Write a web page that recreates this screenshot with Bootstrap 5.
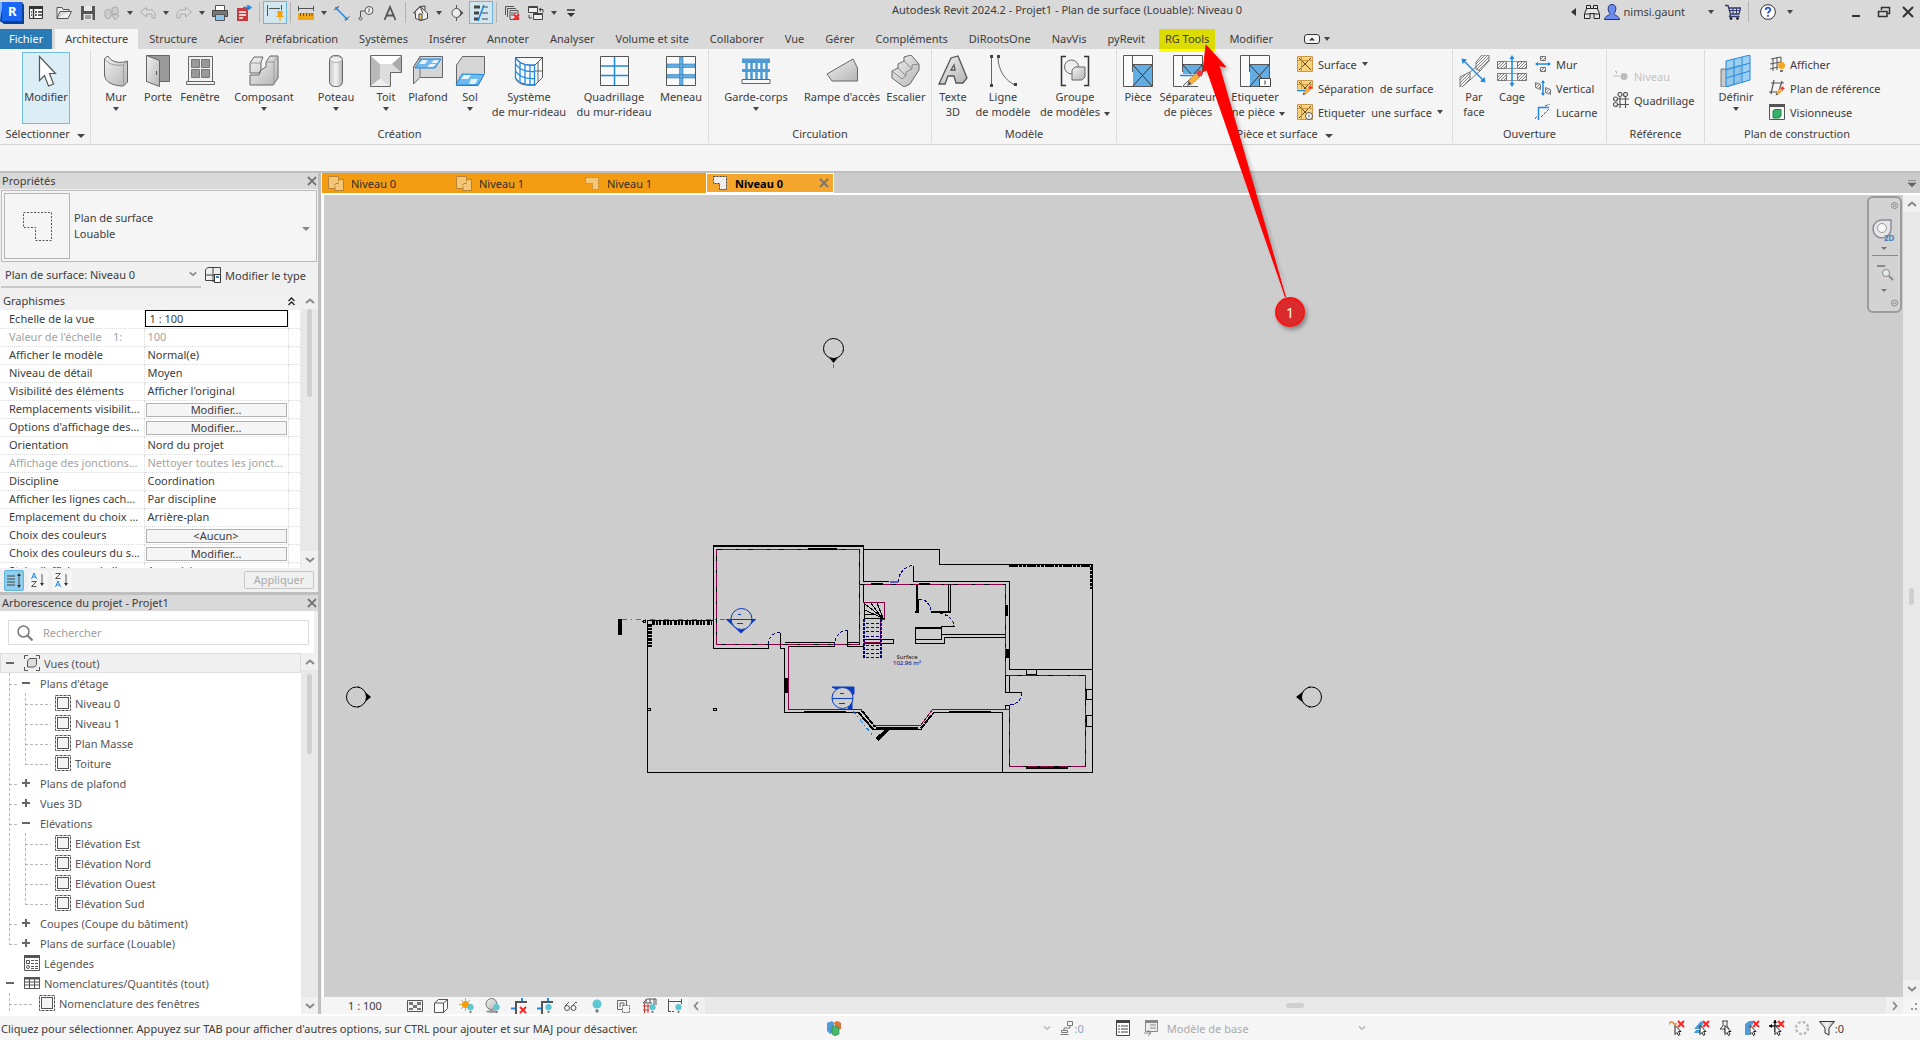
<!DOCTYPE html>
<html lang="fr">
<head>
<meta charset="utf-8">
<meta name="viewport" content="width=device-width, initial-scale=1">
<title>Autodesk Revit 2024.2 - Projet1</title>
<link href="https://cdn.jsdelivr.net/npm/bootstrap@5.3.0/dist/css/bootstrap.min.css" rel="stylesheet">
<style>
:root{--ink:#3c3c3c;--line:#c0c0c0;--bar:#d9d9d9;--pane:#f5f5f5;--canvas:#cdcdcd}
body{font-family:"Noto Sans","Open Sans",sans-serif;font-size:11px;line-height:15px;color:var(--ink);background:var(--pane);height:100vh;overflow:hidden}
button,input,select{font:inherit;color:inherit}
.btn{--bs-btn-padding-x:0;--bs-btn-padding-y:0;--bs-btn-border-radius:0;--bs-btn-font-size:11px;--bs-btn-line-height:15px;--bs-btn-color:var(--ink);--bs-btn-border-width:0;--bs-btn-disabled-color:#aaa;--bs-btn-disabled-opacity:1}
svg{display:block;flex:none}
.s16{width:16px;height:16px}.s20{width:20px;height:20px}.s32{width:32px;height:32px}
.dn{display:inline-block;border:3px solid transparent;border-top:4px solid #444;border-bottom:0;flex:none}
.dn-lg{border-width:4px 4px 0;border-style:solid}
/* title bar */
.titlebar{background:var(--bar);height:29px}
.tool{width:24px;height:23px;display:flex;align-items:center;justify-content:center}
.tool.tool-on{background:#d1e6ef;border:1px solid #6ab9dd}
.drop{width:12px;height:23px;display:flex;align-items:center;justify-content:center}
.rule{width:1px;height:21px;margin:0 3px;background:#b4b4b4}
.brand-r{width:24px;height:25px}
.wintitle{transform:translateX(-68px);padding-top:2px}
/* tabs */
.tabrow{background:var(--bar);height:20px;column-gap:1px}
.tabrow .nav-link{--bs-nav-link-color:var(--ink);color:var(--ink);padding:0 10px;height:20px;line-height:20px;border:0;white-space:nowrap}
.tabrow .file-tab{background:#2a7ab5;color:#fff;padding:0 9px;margin-right:2px}
.tabrow .nav-link.active{background:var(--pane)}
.tabrow .nav-link.hl{background:#dcdc00;box-shadow:0 3px 0 #ffff00,0 -2px 0 #dcdc00;padding:0 6px;margin:0 3px}
/* ribbon */
.ribbon{height:96px;border-bottom:1px solid #d4d4d4}
.panel{border-right:1px solid #dcdcdc;height:93px;margin-top:1px;display:flex;flex-direction:column;flex:none}
.panel-body{display:flex;flex:1 1 0;min-height:0;padding:2px 0 0 2px}
.panel-name{height:19px;line-height:19px;text-align:center;white-space:nowrap}
.big{display:flex;flex-direction:column;align-items:center;padding-top:3px;white-space:nowrap;flex:none;height:72px}
.big svg{margin-bottom:2px}
.big .dn{margin-top:3px}
.b38{width:38px}.b42{width:42px}.b48{width:48px}.b58{width:58px}.b76{width:76px}.b86{width:86px}
.modbtn{background:#dbedf5;outline:1px solid #6fbde0;outline-offset:-1px}
.stack{display:flex;flex-direction:column}
.small-cmd{display:flex;align-items:center;gap:5px;height:24px;white-space:nowrap}
.optbar{height:28px;border-bottom:2px solid #bfbfbf}
/* palettes */
.side{width:321px;border-right:3px solid #bfbfbf;background:#f0f0f0}
.half{flex:1 1 0;min-height:0;display:flex;flex-direction:column}
.pal-title{background:var(--bar);height:16px;line-height:16px;padding:0 1px 0 2px;display:flex;justify-content:space-between;align-items:center}
.pal-title h2{font-size:11px;line-height:16px;margin:0;font-weight:400}
.typebox{border:1px solid #bbb;background:var(--pane);margin:1px 1px 0;height:72px;padding:2px}
.thumb{width:66px;height:66px;border:1px solid #b4b4b4;display:flex;align-items:center;justify-content:center}
.flat-select{appearance:none;background:transparent;border:0;outline:0;color:inherit;padding:0}
.inst{width:200px;border-bottom:2px solid #c8c8c8;margin-left:1px;height:26px;padding:0 4px}
.group-row{height:18px;line-height:18px;padding:0 6px 0 3px;background:#f1f1f1}
.props{table-layout:fixed;width:100%;margin:0;border-collapse:collapse;background:#fff}
.props th,.props td{height:18px;padding:0;font-weight:400;line-height:16px;border-bottom:1px dotted #dcdcdc;border-right:1px dotted #dcdcdc;white-space:nowrap;color:var(--ink)}
.props th{padding-left:9px}.props td{padding-left:3px}
.props .dim th,.props .dim td{color:#a3a3a3}
.props .btn{display:block;width:141px;height:14px;line-height:12px;border:1px solid #b2b2b2;background:var(--pane);margin-left:-2px;margin-top:1px}
.props input{display:block;width:143px;height:17px;border:1px solid #000;margin-left:-3px;padding:0 4px;background:#fff}
.vbar{width:17px;background:#e8e8e8;display:flex;flex-direction:column;align-items:center;justify-content:space-between;flex:none}
.vbar .btn{width:17px;height:17px;background:#f0f0f0;display:flex;align-items:center;justify-content:center}
.thumb-v{width:5px;border-radius:3px;background:#cfcfcf}
.sortbtn{width:20px;height:21px;display:flex;align-items:center;justify-content:center;border:1px solid transparent;background:var(--pane)}
.sortbtn.on{background:#8ecdec;border-color:#5fb5de;border-radius:2px}
.apply{width:70px;height:18px;line-height:16px!important;border:1px solid #c6c6c6!important;border-radius:2px!important;background:#f0f0f0!important}
.findbox{border:1px solid #dcdcdc;height:25px;margin:9px 5px 8px 8px;padding:0 8px;background:#fff}
.findbox input{border:0;outline:0;background:transparent;width:100%}
.findbox input::placeholder{color:#a0a0a0}
/* project tree */
.tree,.tree ul{list-style:none;margin:0;padding:0}
.trow{height:20px;display:flex;align-items:center;white-space:nowrap;color:#555}
.trow .btn{width:20px;height:20px;display:flex;align-items:center;justify-content:center}
.root-sel{background:#f0f0f0;outline:1px solid #dedede;outline-offset:-1px}
.g1>li,.g2>li{background:repeating-linear-gradient(#b8b8b8 0 3px,transparent 3px 5px) no-repeat 9px 0/1px 100%}
.g2>li{background-position:25px 0}
.g1>li:last-child,.g2>li:last-child{background-size:1px 11px}
.g1>li>.trow,.g2>li>.trow{background:repeating-linear-gradient(90deg,#b8b8b8 0 3px,transparent 3px 5px) no-repeat 9px 11px/10px 1px}
.g1>li>.trow{padding-left:16px}
.g1>li>.trow.leaf{padding-left:39px;background-size:25px 1px}
.g2>li>.trow{padding-left:55px;background-position:25px 11px;background-size:26px 1px}
/* drawing area */
.viewtabs{height:20px;background:#cbcbcb}
.vtab{width:128px;height:20px;background:#f39c12;display:flex;align-items:center;gap:7px;padding:0 4px 0 6px;color:#2d2d2d}
.vtab.vtab-on{background:#f4a62d;border:1px solid #fff;font-weight:700;color:#000;padding-left:5px}
.drawing{background:var(--canvas);border-top:2px solid #fff;border-left:2px solid #fff}
.plan{width:100%;height:100%}
.navbox{position:absolute;right:1px;top:1px;width:35px;height:117px;border:2px solid #9b9b9b;border-radius:6px;background:#d3d3d3}
.viewctl{height:17px;background:var(--pane)}
.viewctl .scale-btn{padding:0 20px 0 26px}
.vc{width:26px;height:17px;display:flex;align-items:center;justify-content:center}
.hbar{background:#e8e8e8}
.hbar .btn{width:17px;height:17px;display:flex;align-items:center;justify-content:center;background:#f0f0f0}
.thumb-h{width:18px;height:5px;border-radius:3px;background:#cfcfcf}
.status{height:26px;border-top:2px solid #fff;background:var(--pane)}
.st{width:25px;height:22px;display:flex;align-items:center;justify-content:center}
.st-end{padding-right:76px}
/* annotation over the window */
.callout{position:absolute;left:0;top:0;width:1320px;height:340px;pointer-events:none}
.step{position:absolute;left:1275px;top:297px;width:30px;height:30px;border-radius:50%;background:#d92b2b;border:2px solid #fb1414;color:#fff;font-size:14px;display:flex;align-items:center;justify-content:center;box-shadow:2px 3px 4px rgba(0,0,0,.35);pointer-events:none}
</style>
</head>
<body class="d-flex flex-column position-relative">
<svg width="0" height="0" class="position-absolute" aria-hidden="true">
<defs>
<linearGradient id="gr" x1="0" y1="0" x2="1" y2="1"><stop offset="0" stop-color="#f2f2f2"/><stop offset="1" stop-color="#b4b4b4"/></linearGradient>
<linearGradient id="ghor"><stop offset="0" stop-color="#c8c8c8"/><stop offset=".5" stop-color="#f4f4f4"/><stop offset="1" stop-color="#b0b0b0"/></linearGradient>
<pattern id="hat" width="3" height="3" patternUnits="userSpaceOnUse"><path d="M0 3 3 0" stroke="#666" stroke-width=".8"/></pattern>
</defs>
<symbol id="up" viewBox="0 0 10 6"><path d="M1 5 5 1.500 9 5" fill="none" stroke="#888" stroke-width="2"/></symbol>
<symbol id="down" viewBox="0 0 10 6"><path d="M1 1 5 4.500 9 1" fill="none" stroke="#888" stroke-width="2"/></symbol>
<symbol id="close" viewBox="0 0 10 10"><path d="M1 1 9 9M9 1 1 9" fill="none" stroke="#777" stroke-width="1.800"/></symbol>
<symbol id="bulb" viewBox="0 0 16 16"><circle cx="8" cy="6" r="4.500" fill="#5cc6d4"/><path d="M6.500 11.500h3v2l-1.500 1.500-1.500-1.500z" fill="#777"/></symbol>
<symbol id="sheet" viewBox="0 0 16 16"><rect x=".5" y=".5" width="15" height="15" fill="none" stroke="#555" stroke-dasharray="3 1"/><rect x="2.500" y="2.500" width="11" height="11" fill="#f3f3f3" stroke="#555"/></symbol>
<symbol id="area" viewBox="0 0 16 16"><path d="M1.500 1.500h13v13h-7v-6h-6z" fill="#eee" stroke="#444" stroke-dasharray="2 1"/></symbol>
<symbol id="floorv" viewBox="0 0 16 16"><path d="M.5 1.500h10v3h5v11H7v-2H.5z" fill="#f5c57a" stroke="#b98433"/><path d="M10.500 4.500v4M7 13.500v-5h3" fill="none" stroke="#b98433" stroke-dasharray="2 1"/></symbol>
<symbol id="areav" viewBox="0 0 16 16"><path d="M1.500 2.500h13v12h-6v-6h-7z" fill="#f5c57a" stroke="#b98433" stroke-dasharray="2 1"/></symbol>
<symbol id="xroom" viewBox="0 0 32 32"><path d="M1.500.5h29v31h-29z" fill="#fafafa" stroke="#555"/><path d="M10.500.5V17M10.500 9.500h20" fill="none" stroke="#555"/><path d="M11 10h19v21H11z" fill="#62aee4"/><path d="m11 10 19 21M30 10 11 31" stroke="#333" fill="none"/></symbol>
<symbol id="xarea" viewBox="0 0 16 16"><path d="M.5.500h15v15H.5z" fill="#fbd178" stroke="#c99a4c"/><path d="m2 2 12 12M14 2 2 14" fill="none" stroke="#5c4a20"/><path d="M1 4.500h14M4.500 1v14" fill="none" stroke="#c99a4c"/></symbol>
<symbol id="pencil" viewBox="0 0 16 16"><path d="m1 15 1.500-5L5 13.500z" fill="#555"/><path d="m2.500 10 6-6L12 7.500l-7 6z" fill="#f7b13c" stroke="#b98433" stroke-width=".5"/><path d="m9 3.500 3-3L15.500 4 12 7z" fill="#f33"/></symbol>
<symbol id="ptr" viewBox="0 0 16 16"><path d="M6 5.500v9l2-2 1.500 3 1.500-1-1.500-3H12z" fill="#fff" stroke="#222"/></symbol>
<symbol id="redx" viewBox="0 0 16 16"><path d="m9 1 6 6m0-6-6 6" stroke="#f22" stroke-width="2"/></symbol>
</svg>

<header class="titlebar d-flex align-items-start position-relative">
  <div class="d-flex align-items-center" role="toolbar" aria-label="Accès rapide">
    <button class="btn" aria-label="Menu Revit"><svg class="brand-r" viewBox="0 0 24 25"><path d="M0 2h3v20H0z" fill="#7fb2f5"/><path d="M3 2h19l2 3v19H4l-4-3z" fill="#0a3f9a"/><path d="M2 2h20v19H2z" fill="#1a66f0"/><text x="8" y="16" font-size="13" font-weight="700" fill="#fff">R</text></svg></button>
    <button class="btn tool me-1" aria-label="Accueil"><svg class="s16" viewBox="0 0 16 16"><path d="M1.500 1.500h13v12h-13z" fill="#fff" stroke="#333"/><path d="M1 1h14v3H1z" fill="#333"/><path d="M5.500 4v10M3 7h1M3 10h1M7 7h2m1 0h4M7 10h2m1 0h4" stroke="#333" stroke-width="1.500"/></svg></button>
    <button class="btn tool" aria-label="Ouvrir"><svg class="s16" viewBox="0 0 16 16"><path d="M1 13.500v-11h5l1 2h6v2H4l-3 7h11l3.500-7H13" fill="#eee" stroke="#555"/></svg></button>
    <button class="btn tool" aria-label="Enregistrer"><svg class="s16" viewBox="0 0 16 16"><path d="M1 1h14v14H1z" fill="#555"/><path d="M4 1h8v5H4zM3.500 9h9v6h-9z" fill="#e6e6e6"/><path d="M5 11h6M5 13h6" stroke="#555"/></svg></button>
    <button class="btn tool" aria-label="Synchroniser"><svg class="s16" viewBox="0 0 16 16" fill="#ccc" stroke="#aaa"><path d="m1 6 3-2 3 2v6l-3 2-3-2z"/><ellipse cx="11" cy="4" rx="3" ry="2"/><path d="M8 4v5h6V4M8 10l4-1 3 2-4 4z"/></svg></button>
    <button class="btn drop" aria-label="Options de synchronisation"><i class="dn"></i></button>
    <button class="btn tool" aria-label="Annuler"><svg class="s16" viewBox="0 0 16 16"><path d="m.5 7 6-4.500V5H12l3 3v5h-3V9H6.500v3z" fill="#ddd" stroke="#aaa"/></svg></button>
    <button class="btn drop" aria-label="Liste annuler"><i class="dn"></i></button>
    <button class="btn tool" aria-label="Rétablir"><svg class="s16" viewBox="0 0 16 16"><path d="m15.500 7-6-4.500V5H4L1 8v5h3V9h5.500v3z" fill="#ddd" stroke="#aaa"/></svg></button>
    <button class="btn drop" aria-label="Liste rétablir"><i class="dn"></i></button>
    <button class="btn tool" aria-label="Imprimer"><svg class="s16" viewBox="0 0 16 16"><path d="M3.500.500h9v5h-9z" fill="#fff" stroke="#555"/><path d="M.5 5.500h15v6H.5z" fill="#777" stroke="#444"/><path d="M3.500 9.500h9v6h-9z" fill="#8cc5ee" stroke="#555"/></svg></button>
    <button class="btn tool" aria-label="Exporter en PDF"><svg class="s16" viewBox="0 0 16 16"><path d="M1 3h11v13H1z" fill="#c9393e"/><path d="M3 7h7M3 10h7M3 13h4" stroke="#fff" stroke-width="1.500"/><path d="M7 2.500h6M11 0l4 2.500L11 5" stroke="#1e88e5" stroke-width="1.500" fill="none"/></svg></button>
    <i class="rule"></i>
    <button class="btn tool tool-on" aria-label="Contraintes"><svg class="s20" viewBox="0 0 20 20"><path d="M2.500 2v11M16.500 2v5M4 5.500h11" stroke="#555" fill="none"/><path d="M12 8h6l-1 4 2 2h-3.500v4h-1v-4H11l2-2z" fill="#f5a000"/></svg></button>
    <i class="rule"></i>
    <button class="btn tool" aria-label="Mesurer"><svg class="s16" viewBox="0 0 16 16"><path d="M.5 1v5M15.500 1v5M1 3.500h14" stroke="#555"/><path d="M0 8h16v7H0z" fill="#f0a818"/><path d="M2.500 8v3M5.500 8v3M8.500 8v3M11.500 8v3M14 8v3" stroke="#7a5200"/></svg></button>
    <button class="btn drop" aria-label="Options de mesure"><i class="dn"></i></button>
    <button class="btn tool" aria-label="Cote alignée"><svg class="s16" viewBox="0 0 16 16"><path d="m2 3 11 11" stroke="#1e88e5" stroke-width="1.500"/><path d="m0 5 5-4M11 15.500l4.500-4" stroke="#555"/><path d="M1 2h4L2 5zM14 15h-4l3-3z" fill="#1e88e5"/></svg></button>
    <button class="btn tool" aria-label="Etiquette"><svg class="s16" viewBox="0 0 16 16"><circle cx="11" cy="5.500" r="4" fill="#eee" stroke="#555"/><path d="M11 3.500v4M7 6H2.500v6" stroke="#555" fill="none"/><circle cx="2.500" cy="13.500" r="1.500" fill="none" stroke="#555"/></svg></button>
    <button class="btn tool" aria-label="Texte"><svg class="s16" viewBox="0 0 16 16"><path d="M2.500 15 8 2l5.500 13M4.500 10.500h7" stroke="#555" stroke-width="1.800" fill="none"/></svg></button>
    <i class="rule"></i>
    <button class="btn tool" aria-label="Vue 3D"><svg class="s16" viewBox="0 0 16 16"><path d="m1 8 6-6.500L14.500 8v5.500L8 15.500l-5.500-2V8z" fill="#eee" stroke="#444"/><path d="M7 1.500 12 1v4M0 8.500 7 1.500l3 7" fill="none" stroke="#444"/><path d="M6 9h3v6H6z" fill="#f3d26e" stroke="#444"/></svg></button>
    <button class="btn drop" aria-label="Options vue 3D"><i class="dn"></i></button>
    <button class="btn tool" aria-label="Coupe"><svg class="s16" viewBox="0 0 16 16"><circle cx="7.500" cy="8" r="4.500" fill="#eee" stroke="#555"/><path d="M7.500 0v3.500M7.500 12.500V16" stroke="#555"/><path d="M9 3.500 14.500 8 9 12.500 12 8z" fill="#444"/></svg></button>
    <button class="btn tool tool-on" aria-label="Lignes fines"><svg class="s20" viewBox="0 0 20 20"><path d="M3 4h6" stroke="#444" stroke-width="3"/><path d="M3 10h5" stroke="#444" stroke-width="3"/><path d="M3 16h5" stroke="#444" stroke-width="3"/><path d="M11 4h6M11 10h6M11 16h6" stroke="#444"/><path d="M13 2 7 18" stroke="#1e88e5" stroke-width="1.500"/></svg></button>
    <i class="rule"></i>
    <button class="btn tool" aria-label="Fermer les vues inactives"><svg class="s16" viewBox="0 0 16 16"><path d="M1.500 10V1.500H10M3.500 12V3.500H12" fill="none" stroke="#555"/><path d="M6 5.500h8v9H6z" fill="#ddd" stroke="#555"/><path d="M7 8h6M7 10h3" stroke="#555"/><path d="m10 9.500 5 5m0-5-5 5" stroke="#f22" stroke-width="2"/></svg></button>
    <button class="btn tool" aria-label="Changer de fenêtre"><svg class="s16" viewBox="0 0 16 16"><path d="M.5 1.500h9v6h-9zM5.500 8.500h9v6h-9z" fill="#eee" stroke="#444"/><path d="M.5 2.500h9M5.500 9.500h9M11 4.500h4v3M13 3l-2 1.500L13 6M4 13H1v-3" fill="none" stroke="#444"/></svg></button>
    <button class="btn drop" aria-label="Liste des fenêtres"><i class="dn"></i></button>
    <button class="btn tool" aria-label="Personnaliser"><svg class="s16" viewBox="0 0 16 16"><path d="M3 5h8" stroke="#333" stroke-width="1.500"/><path d="M3 8h8l-4 4z" fill="#333"/></svg></button>
  </div>
  <div class="wintitle position-absolute start-50 text-nowrap">Autodesk Revit 2024.2 - Projet1 - Plan de surface (Louable): Niveau 0</div>
  <div class="d-flex align-items-center ms-auto">
    <button class="btn drop" aria-label="Réduire la recherche"><svg width="5" height="8" viewBox="0 0 5 8"><path d="M5 0v8L0 4z" fill="#333"/></svg></button>
    <button class="btn tool" aria-label="Rechercher"><svg class="s16" viewBox="0 0 16 16" fill="#e6e6e6" stroke="#222"><path d="M2.500 1.500h4v3H8V4.500h1.500v-3h4V5l2 4.500v5h-5.500v-5H6v5H.5v-5L2.500 5z"/><path d="M.5 10h5.500M10 10h5.500M2.500 4.500h4M9.500 4.500h4"/></svg></button>
    <button class="btn d-flex align-items-center gap-1 pe-1" aria-label="nimsi.gaunt"><svg class="s16" viewBox="0 0 16 16"><path d="M8 .5c5 0 4.500 6.500 2 9 0 2 5 2 5.500 6H.5c.5-4 5.500-4 5.500-6C3.500 7 3 .5 8 .5z" fill="#6c8df0" stroke="#1d2f70"/></svg><span>nimsi.gaunt</span></button>
    <button class="btn drop ms-3" aria-label="Menu du compte"><i class="dn"></i></button>
    <button class="btn tool ms-1" aria-label="Boutique"><svg class="s16" viewBox="0 0 16 16"><path d="M0 1.500h3l2.500 8.500H14l1.500-6H4M5.500 10l-1 2.500h10" fill="none" stroke="#2f3b6e" stroke-width="1.300"/><path d="M5 6.500h10M8 4v6M11.500 4v6" stroke="#2f3b6e"/><circle cx="6" cy="14.500" r="1.300"/><circle cx="12.500" cy="14.500" r="1.300"/></svg></button>
    <i class="rule"></i>
    <button class="btn tool mx-1" aria-label="Aide"><svg class="s16" viewBox="0 0 16 16"><circle cx="8" cy="8" r="7.400" fill="#fff" stroke="#333"/><path d="M5.800 6c0-3 4.500-3 4.500-.3C10.300 7.500 8 7.500 8 9.500M8 11v1.800" fill="none" stroke="#2456c8" stroke-width="1.800"/></svg></button>
    <button class="btn drop" aria-label="Menu d'aide"><i class="dn"></i></button>
    <button class="btn tool ms-5 me-1" aria-label="Réduire"><svg class="s16 mx-1" viewBox="0 0 16 16"><path d="M4 12h8" stroke="#333" stroke-width="2"/></svg></button>
    <button class="btn tool" aria-label="Niveau inférieur"><svg class="s16" viewBox="0 0 16 16"><path d="M5.500 6V3.500h8v6H11" fill="none" stroke="#333" stroke-width="1.500"/><path d="M2.500 7.500H11v5H2.500z" fill="none" stroke="#333" stroke-width="1.500"/></svg></button>
    <button class="btn tool" aria-label="Fermer"><svg width="12" height="12" viewBox="0 0 12 12"><path d="m1 1 10 10M11 1 1 11" stroke="#333" stroke-width="2"/></svg></button>
  </div>
</header>

<nav class="tabrow nav flex-nowrap" aria-label="Onglets du ruban">
  <a class="nav-link file-tab" href="#">Fichier</a><a class="nav-link active" href="#">Architecture</a><a class="nav-link" href="#">Structure</a><a class="nav-link" href="#">Acier</a><a class="nav-link" href="#">Préfabrication</a><a class="nav-link" href="#">Systèmes</a><a class="nav-link" href="#">Insérer</a><a class="nav-link" href="#">Annoter</a><a class="nav-link" href="#">Analyser</a><a class="nav-link" href="#">Volume et site</a><a class="nav-link" href="#">Collaborer</a><a class="nav-link" href="#">Vue</a><a class="nav-link" href="#">Gérer</a><a class="nav-link" href="#">Compléments</a><a class="nav-link" href="#">DiRootsOne</a><a class="nav-link" href="#">NavVis</a><a class="nav-link" href="#">pyRevit</a><a class="nav-link hl" href="#">RG Tools</a><a class="nav-link" href="#">Modifier</a>
  <button class="btn d-flex align-items-center gap-1 ms-3 ps-1" aria-label="Réduire le ruban"><svg width="16" height="10" viewBox="0 0 16 10"><rect x=".5" y=".5" width="15" height="9" rx="2.500" fill="#f4f4f4" stroke="#333"/><path d="M5 6.500h6L8 3.500z" fill="#333"/></svg><i class="dn"></i></button>
</nav>

<section class="ribbon d-flex" aria-label="Ruban Architecture">
  <div class="panel" style="width:91px">
    <div class="panel-body justify-content-center">
      <button class="btn big b48 modbtn"><svg class="s32" viewBox="0 0 32 32"><path d="M9.500 1.500v24l5-5 4 10.500 5-2-4-10.500h6z" fill="#fff" stroke="#555" stroke-width="1.200"/></svg>Modifier</button>
    </div>
    <button class="btn panel-name">Sélectionner <i class="dn dn-lg ms-1"></i></button>
  </div>
  <div class="panel" style="width:618px">
    <div class="panel-body ps-1">
      <button class="btn big b42"><svg class="s32" viewBox="0 0 32 32"><path d="M4.500 3.500 8 1c3 6 11 8 19.500 5v21l-4 4C13 31 5 27 4.500 20z" fill="url(#gr)" stroke="#666"/><path d="M4.500 3.500C8 9 14 11 23.500 10v21M23.500 10l4-4" fill="none" stroke="#999"/></svg>Mur<i class="dn"></i></button>
      <button class="btn big b42"><svg class="s32" viewBox="0 0 32 32"><path d="M4.500.500h23v26h-23z" fill="#9a9a9a" stroke="#666"/><path d="m4.500.500 13 5v26l-13-5z" fill="url(#gr)" stroke="#666"/><path d="M14.500 16v4" stroke="#555"/></svg>Porte</button>
      <button class="btn big b42"><svg class="s32" viewBox="0 0 32 32"><path d="M4.500 1.500h24v25h-24zM2.500 26.500h28v3h-28z" fill="#f2f2f2" stroke="#666"/><path d="M7.500 4.500h8v8h-8zM17.500 4.500h8v8h-8zM7.500 14.500h8v8h-8zM17.500 14.500h8v8h-8z" fill="#999" stroke="#777"/></svg>Fenêtre</button>
      <button class="btn big b86"><svg class="s32" viewBox="0 0 32 32"><path d="m2 8 4-6h9l-2 5v8l5-3V7l4-6h8v22l-5 7H2V20h9l2-5-2 3H2z" fill="url(#gr)" stroke="#666"/><path d="M2 8h11M18 7h8l4-6M26 7v23" fill="none" stroke="#999"/></svg>Composant<i class="dn"></i></button>
      <button class="btn big b58"><svg class="s32" viewBox="0 0 32 32"><rect x="9.500" y=".5" width="13" height="31" rx="5" fill="url(#ghor)" stroke="#666"/><ellipse cx="16" cy="4.500" rx="6" ry="3" fill="#eee" stroke="#999" stroke-width=".7"/></svg>Poteau<i class="dn"></i></button>
      <button class="btn big b42"><svg class="s32" viewBox="0 0 32 32"><path d="M.5.500h31v17h-11v14H.500z" fill="#ddd"/><path d="M.5.500 10 9v15l-9.500 7z" fill="#b9b9b9"/><path d="M.5.500h31L22 9H10z" fill="#fff"/><path d="M31.500.500v17L22 9z" fill="#aaa"/><path d="m.5 31.500 9.500-8 10 8z" fill="#eee"/><path d="M.5.500h31v17h-11v14H.500z" fill="none" stroke="#666"/></svg>Toit<i class="dn"></i></button>
      <button class="btn big b42"><svg class="s32" viewBox="0 0 32 32"><path d="M8 1.500h22.500v21H8L1.500 29V12z" fill="#d5d5d5" stroke="#666"/><path d="M1.500 12 8 1.500V23" fill="none" stroke="#777"/><path d="M9 4h20l-6 9H3z" fill="#6fb9ee" stroke="#1e88e5"/><path d="m10 5h6l-3 4H7zM18 9h6l-3 3h-6zM22 5h5l-2 3h-6z" fill="#e4f3fd"/></svg>Plafond</button>
      <button class="btn big b42"><svg class="s32" viewBox="0 0 32 32"><path d="M8.500 1.500h22v17L24 30.500H2.500V10z" fill="#d5d5d5" stroke="#666"/><path d="m8 19 22 .5-6 10.500H2z" fill="#6fb9ee" stroke="#1e88e5"/><path d="M10 20h7l-3 4H7zM17 24h7l-3 5h-6z" fill="#e4f3fd"/></svg>Sol<i class="dn"></i></button>
      <button class="btn big b76"><svg class="s32" viewBox="0 0 32 32"><path d="M2.500 2.500h27v20L22 30C12 31 4 29 2.500 23zM22 10l7.500-7.500M2.500 2.500C6 8 12 11 22 10" fill="#fafafa" stroke="#555"/><path d="M2.500 3v20c3 5 10 7 19 7V10C12 11 6 8 2.500 3M2.500 9c4 6 11 8 19 7.500M2.500 16c4 6 11 8 19 7.500M7 7v20M12 9v20M17 10v20" fill="none" stroke="#1e88e5" stroke-width="1.300"/><path d="M25 7v20M22 16h7" stroke="#666"/></svg>Système<br>de mur-rideau</button>
      <button class="btn big b86 ms-1"><svg class="s32" viewBox="0 0 32 32"><path d="M2.500 1.500h28v29h-28z" fill="#fafafa" stroke="#555"/><path d="M16.500 2v28M3 11h27M3 20.500h27" stroke="#1e88e5" stroke-width="1.500"/></svg>Quadrillage<br>du mur-rideau</button>
      <button class="btn big b48"><svg class="s32" viewBox="0 0 32 32"><path d="M1.500 1.500h29v29h-29z" fill="#fafafa" stroke="#555"/><path d="M2 9h28v3.500H2zM2 19.500h28V23H2zM14.500 2H18v28h-3.500z" fill="#62aee4" stroke="#3a7cb0" stroke-width=".6"/></svg>Meneau</button>
    </div>
    <div class="panel-name">Création</div>
  </div>
  <div class="panel" style="width:223px">
    <div class="panel-body ps-1">
      <button class="btn big b86"><svg class="s32" viewBox="0 0 32 32"><path d="M2 3.500h28V8H2zM2 14h28v3H2z" fill="#4d9bd5"/><path d="M6.500 8v16M11.500 8v16M16.500 8v16M21.500 8v16M26.500 8v16" stroke="#4d9bd5" stroke-width="2.500"/><path d="M2 24.500h28v4H2z" fill="#f8f8f8" stroke="#666"/></svg>Garde-corps<i class="dn"></i></button>
      <button class="btn big b86"><svg class="s32" viewBox="0 0 32 32"><path d="M1 19 27 4l4.500 9v13H6z" fill="url(#gr)" stroke="#666"/></svg>Rampe d'accès</button>
      <button class="btn big b42"><svg class="s32" viewBox="0 0 32 32"><path d="m2 16 6-3V9l6-3V2l7-2 8 9v6l-9 14-6 3-12-9z" fill="url(#gr)" stroke="#666"/><path d="m8 13 8 8M14 6l8 8M2 16l10 8 4-3v-4l6-3v-4l7-1" fill="none" stroke="#888"/></svg>Escalier</button>
    </div>
    <div class="panel-name">Circulation</div>
  </div>
  <div class="panel" style="width:185px">
    <div class="panel-body ps-0">
      <button class="btn big b42"><svg class="s32" viewBox="0 0 32 32"><path d="M2 29 14 3l7-2 9 22-4 5h-7l-2-7h-6l-3 8zM14 15h4l-1-5z" fill="url(#gr)" stroke="#555" stroke-width="1.300" fill-rule="evenodd"/></svg>Texte<br>3D</button>
      <button class="btn big b58"><svg class="s32" viewBox="0 0 32 32"><path d="M4.500 2v28M11 2c0 14 8 24 17 28" fill="none" stroke="#666"/><path d="M3 0h3v3H3zM3 29h3v3H3zM10 0h3v3h-3zM27 28h3v3h-3z" fill="#444"/></svg>Ligne<br>de modèle</button>
      <button class="btn big b86"><svg class="s32" viewBox="0 0 32 32"><path d="M7 1.500H2.500v29H7M25 1.500h4.500v29H25" fill="none" stroke="#333" stroke-width="1.500"/><circle cx="12.500" cy="12" r="7" fill="#eee" stroke="#666"/><path d="m13 15 3-3h10v10l-3 3H13z" fill="url(#gr)" stroke="#666"/></svg>Groupe<br><span>de modèles<i class="dn ms-1"></i></span></button>
    </div>
    <div class="panel-name">Modèle</div>
  </div>
  <div class="panel" style="width:336px">
    <div class="panel-body ps-0">
      <button class="btn big b42"><svg class="s32"><use href="#xroom"/></svg>Pièce</button>
      <button class="btn big b58"><svg class="s32" viewBox="0 0 32 32"><use href="#xroom"/><path d="M10 19h21v13H10z" fill="#f5f5f5"/><path d="M8 20.500h22" stroke="#1e88e5" stroke-width="1.500"/><path d="m11 31 8-8M11 31.500h15" stroke="#555"/><use href="#pencil" x="14" y="14" width="18" height="18"/></svg>Séparateur<br>de pièces</button>
      <button class="btn big b76"><svg class="s32" viewBox="0 0 32 32"><use href="#xroom"/><path d="M20.500 23.500h11v8h-11z" fill="#fff" stroke="#444"/><path d="M26 25.500v4" stroke="#333"/></svg>Etiqueter<br><span>une pièce<i class="dn ms-1"></i></span></button>
      <div class="stack ps-1">
        <button class="btn small-cmd"><svg class="s16"><use href="#xarea"/></svg>Surface <i class="dn"></i></button>
        <button class="btn small-cmd"><svg class="s16" viewBox="0 0 16 16"><use href="#xarea"/><path d="M0 9h16v7H0z" fill="#f5f5f5"/><path d="M0 10.500h12" stroke="#1e88e5" stroke-width="1.500"/><use href="#pencil" x="5" y="5" width="11" height="11"/></svg>Séparation&nbsp; de surface</button>
        <button class="btn small-cmd"><svg class="s16" viewBox="0 0 16 16"><use href="#xarea"/><circle cx="12" cy="12" r="3.500" fill="#fff" stroke="#555"/><path d="M12 10.500v3" stroke="#555"/></svg>Etiqueter&nbsp; une surface <i class="dn"></i></button>
      </div>
    </div>
    <button class="btn panel-name">Pièce et surface <i class="dn dn-lg ms-1"></i></button>
  </div>
  <div class="panel" style="width:154px">
    <div class="panel-body">
      <button class="btn big b38"><svg class="s32" viewBox="0 0 32 32"><path d="M2 22 12 17v8L4 32H2zM18 7l6-7h7v6l-9 10-4-2z" fill="url(#hat)" stroke="#777"/><path d="m12 17 6-5M12 25l10-9" stroke="#777"/><path d="m5 5 21 21" stroke="#1e88e5" stroke-width="1.500"/><path d="M3.500 3.500 9 4.500 4.500 9zM27.500 27.500l-5.500-1 4.500-4.500z" fill="#1e88e5"/></svg>Par<br>face</button>
      <button class="btn big b38"><svg class="s32" viewBox="0 0 32 32"><path d="M1.500 6.500h9v7h-9zM21.500 6.500h9v7h-9zM1.500 18.500h9v7h-9zM21.500 18.500h9v7h-9z" fill="url(#hat)" stroke="#777"/><path d="M10 6.500h12M10 13.500h12M10 18.500h12M10 25.500h12" stroke="#999"/><path d="M16 3v26" stroke="#1e88e5" stroke-width="1.500"/><path d="m16 0 2.500 4h-5zM16 32l2.500-4h-5z" fill="#1e88e5"/></svg>Cage</button>
      <div class="stack ps-1">
        <button class="btn small-cmd"><svg class="s16" viewBox="0 0 16 16"><path d="M5.500.500h5v4h-5zM5.500 11.500h5v4h-5z" fill="url(#hat)" stroke="#777"/><path d="M1 8h14" stroke="#1e88e5" stroke-width="1.500"/><path d="M0 8l3-2v4zM16 8l-3-2v4z" fill="#1e88e5"/></svg>Mur</button>
        <button class="btn small-cmd"><svg class="s16" viewBox="0 0 16 16"><path d="m.5 2.500 5 2v5l-5-2zM10.500 7.500l5 2v5l-5-2z" fill="url(#hat)" stroke="#777"/><path d="M8 1v14" stroke="#1e88e5" stroke-width="1.500"/><path d="m8 0 2 3H6zM8 16l2-3H6z" fill="#1e88e5"/></svg>Vertical</button>
        <button class="btn small-cmd"><svg class="s16" viewBox="0 0 16 16"><path d="M3.500 16V3.500H14" fill="none" stroke="#1e88e5" stroke-width="1.500"/><path d="m0 15 2-3M10 2l5-2M6 13l8-8" stroke="#555" stroke-dasharray="3 1"/></svg>Lucarne</button>
      </div>
    </div>
    <div class="panel-name">Ouverture</div>
  </div>
  <div class="panel" style="width:98px">
    <div class="panel-body align-items-center">
      <div class="stack ps-1">
        <button class="btn small-cmd" disabled><svg class="s16" viewBox="0 0 16 16"><path d="M0 8h7M2 3.500h1.500V6" stroke="#bbb" fill="none"/><circle cx="11" cy="8.500" r="3.500" fill="#bbb"/></svg><span style="color:#c4c4c4">Niveau</span></button>
        <button class="btn small-cmd"><svg class="s16" viewBox="0 0 16 16" fill="none" stroke="#555" stroke-width="1.200"><circle cx="7" cy="2.500" r="2"/><circle cx="12.500" cy="2.500" r="2"/><circle cx="2.500" cy="7" r="2"/><circle cx="2.500" cy="12.500" r="2"/><path d="M7 5v11M12.500 5v11M5 7h11M5 12.500h11"/></svg>Quadrillage</button>
      </div>
    </div>
    <div class="panel-name">Référence</div>
  </div>
  <div class="panel border-0" style="width:184px">
    <div class="panel-body">
      <button class="btn big b58"><svg class="s32" viewBox="0 0 32 32"><path d="M1 14h5l14-4v16L6 32H1z" fill="#c9c9c9" stroke="#777"/><path d="M6 6 30 0v25L6 32z" fill="#7fc3f1" fill-opacity=".75" stroke="#1e88e5"/><path d="M14 4v26M22 2v26M6 15l24-7M6 23l24-7" stroke="#1e88e5"/></svg>Définir<i class="dn"></i></button>
      <div class="stack ps-1">
        <button class="btn small-cmd"><svg class="s16" viewBox="0 0 16 16"><path d="M2 3l10-2M1 8l11-2M1 13l8-2M4 2v13M8 1v13M12 1v6" stroke="#555" fill="none"/><circle cx="12.500" cy="9.500" r="3.500" fill="#f5a623"/><path d="M11 14h3v2h-3z" fill="#777"/></svg>Afficher</button>
        <button class="btn small-cmd"><svg class="s16" viewBox="0 0 16 16"><path d="M5 0 2 14M13 1l-3 10M2 3h13M0 12h8" stroke="#555" fill="none" stroke-width="1.200"/><use href="#pencil" x="6" y="6" width="10" height="10"/></svg>Plan de référence</button>
        <button class="btn small-cmd"><svg class="s16" viewBox="0 0 16 16"><path d="M.5.500h15v15H.5z" fill="#f6f6f6" stroke="#555"/><path d="M0 0h16v3H0z" fill="#555"/><path d="m4 7 2-1.500h6V12l-2 2H4z" fill="#38b06a" stroke="#24844c"/></svg>Visionneuse</button>
      </div>
    </div>
    <div class="panel-name">Plan de construction</div>
  </div>
</section>
<div class="optbar flex-shrink-0"></div>

<main class="d-flex flex-grow-1" style="min-height:0">
  <aside class="side d-flex flex-column flex-shrink-0">
    <section class="half">
      <div class="pal-title"><h2>Propriétés</h2><button class="btn" aria-label="Fermer Propriétés"><svg width="10" height="10"><use href="#close"/></svg></button></div>
      <div class="typebox d-flex align-items-center">
        <div class="thumb"><svg width="29" height="29" viewBox="0 0 29 29"><path d="M.5.500h28v28h-16v-13H.5z" fill="none" stroke="#555" stroke-dasharray="2 1.500"/></svg></div>
        <div class="ps-1 flex-grow-1" style="line-height:16px">Plan de surface<br>Louable</div>
        <button class="btn pe-1" aria-label="Choisir un type"><i class="dn dn-lg" style="border-top-color:#888"></i></button>
      </div>
      <div class="d-flex align-items-center">
        <div class="inst d-flex align-items-center"><select class="flat-select flex-grow-1" aria-label="Instance"><option>Plan de surface: Niveau 0</option></select><svg width="8" height="6"><use href="#down"/></svg></div>
        <button class="btn d-flex align-items-center gap-1 ms-1 text-nowrap"><svg class="s16" viewBox="0 0 16 16"><path d="M.5 2.500 3 .5h12.500v13H.5zM.5 8h15M8 1v14" fill="#eee" stroke="#444"/><path d="M9.500 7.500h6v8h-6z" fill="#fff" stroke="#333"/><path d="M11 9h3v2h-3z" fill="#3a7cc8"/></svg>Modifier le type</button>
      </div>
      <div class="d-flex flex-grow-1 mt-1 me-0" style="min-height:0">
        <div class="flex-grow-1 overflow-hidden bg-white ms-0">
          <div class="group-row d-flex justify-content-between align-items-center"><span>Graphismes</span><svg width="7" height="9" viewBox="0 0 7 9"><path d="m.5 4 3-3 3 3m-6 4 3-3 3 3" fill="none" stroke="#222" stroke-width="1.300"/></svg></div>
          <table class="props"><colgroup><col style="width:144px"><col style="width:144px"><col></colgroup><tbody>
            <tr><th><label for="scale">Echelle de la vue</label></th><td><input id="scale" type="text" value="1 : 100"></td><td></td></tr>
            <tr class="dim"><th>Valeur de l'échelle &nbsp;&nbsp; 1:</th><td>100</td><td></td></tr>
            <tr><th>Afficher le modèle</th><td>Normal(e)</td><td></td></tr>
            <tr><th>Niveau de détail</th><td>Moyen</td><td></td></tr>
            <tr><th>Visibilité des éléments</th><td>Afficher l'original</td><td></td></tr>
            <tr><th>Remplacements visibilit...</th><td><button class="btn">Modifier...</button></td><td></td></tr>
            <tr><th>Options d'affichage des...</th><td><button class="btn">Modifier...</button></td><td></td></tr>
            <tr><th>Orientation</th><td>Nord du projet</td><td></td></tr>
            <tr class="dim"><th>Affichage des jonctions...</th><td>Nettoyer toutes les jonct...</td><td></td></tr>
            <tr><th>Discipline</th><td>Coordination</td><td></td></tr>
            <tr><th>Afficher les lignes cach...</th><td>Par discipline</td><td></td></tr>
            <tr><th>Emplacement du choix ...</th><td>Arrière-plan</td><td></td></tr>
            <tr><th>Choix des couleurs</th><td><button class="btn">&lt;Aucun&gt;</button></td><td></td></tr>
            <tr><th>Choix des couleurs du s...</th><td><button class="btn">Modifier...</button></td><td></td></tr>
            <tr><th>Style d'affichage de l'...</th><td>Aucun(e)</td><td></td></tr>
          </tbody></table>
        </div>
        <div class="vbar"><button class="btn" aria-label="Défiler vers le haut"><svg width="10" height="6"><use href="#up"/></svg></button><div class="thumb-v mb-auto" style="height:88px"></div><button class="btn" aria-label="Défiler vers le bas"><svg width="10" height="6"><use href="#down"/></svg></button></div>
      </div>
      <div class="d-flex align-items-center gap-1 px-1 py-0" style="height:25px">
        <button class="btn sortbtn on me-0" aria-label="Trier par groupe"><svg class="s16" viewBox="0 0 16 16"><path d="M1 4h8M1 7h8M1 10h8M1 13h8M13 4v10" stroke="#444"/><path d="m13 1 2 3h-4zM13 16l2-3h-4z" fill="#333"/></svg></button>
        <button class="btn sortbtn" aria-label="Tri croissant"><svg class="s16" viewBox="0 0 16 16"><path d="m1.500 7 2.500-6 2.500 6M2.500 5h3" fill="none" stroke="#1e88e5"/><path d="M1.500 9.500h5l-5 5h5M12 2v10" fill="none" stroke="#555"/><path d="M10 11h4l-2 3z" fill="#333"/></svg></button>
        <button class="btn sortbtn" aria-label="Tri décroissant"><svg class="s16" viewBox="0 0 16 16"><path d="M1.500 1.500h5l-5 5h5M12 2v10" fill="none" stroke="#555"/><path d="m1.500 15 2.500-6 2.500 6M2.500 13h3" fill="none" stroke="#1e88e5"/><path d="M10 11h4l-2 3z" fill="#333"/></svg></button>
        <button class="btn apply ms-auto" disabled>Appliquer</button>
      </div>
    </section>
    <section class="half" style="border-top:3px solid #bfbfbf">
      <div class="pal-title"><h2>Arborescence du projet - Projet1</h2><button class="btn" aria-label="Fermer Arborescence"><svg width="10" height="10"><use href="#close"/></svg></button></div>
      <div class="bg-white me-1 ms-0 overflow-hidden flex-shrink-0"><div class="findbox d-flex align-items-center gap-2"><svg class="s16" viewBox="0 0 16 16"><circle cx="6.500" cy="6.500" r="5.500" fill="none" stroke="#777" stroke-width="1.500"/><path d="m10.500 10.500 5 5" stroke="#777" stroke-width="2"/></svg><input type="text" placeholder="Rechercher" aria-label="Rechercher"></div></div>
      <div class="d-flex flex-grow-1" style="min-height:0">
        <div class="flex-grow-1 bg-white overflow-hidden">
          <ul class="tree">
            <li><div class="trow root-sel"><button class="btn" aria-label="Réduire"><svg width="8" height="2"><path d="M0 1h8" stroke="#666" stroke-width="2"/></svg></button><svg class="s16 ms-1 me-1" viewBox="0 0 16 16"><path d="M.5 4V.5H4M12 .5h3.500V4M15.500 12v3.500H12M4 15.500H.5V12" fill="none" stroke="#555"/><path d="m3.500 6 2-2.500h7v6l-2 2.500h-7z" fill="#ddd" stroke="#555"/></svg>Vues (tout)</div>
              <ul class="g1">
                <li><div class="trow"><button class="btn" aria-label="Réduire"><svg width="8" height="2"><path d="M0 1h8" stroke="#666" stroke-width="2"/></svg></button><span class="ps-1">Plans d'étage</span></div>
                  <ul class="g2">
                    <li><div class="trow"><svg class="s16 me-1"><use href="#sheet"/></svg>Niveau 0</div></li>
                    <li><div class="trow"><svg class="s16 me-1"><use href="#sheet"/></svg>Niveau 1</div></li>
                    <li><div class="trow"><svg class="s16 me-1"><use href="#sheet"/></svg>Plan Masse</div></li>
                    <li><div class="trow"><svg class="s16 me-1"><use href="#sheet"/></svg>Toiture</div></li>
                  </ul></li>
                <li><div class="trow"><button class="btn" aria-label="Développer"><svg width="8" height="8"><path d="M0 4h8M4 0v8" stroke="#666" stroke-width="2"/></svg></button><span class="ps-1">Plans de plafond</span></div></li>
                <li><div class="trow"><button class="btn" aria-label="Développer"><svg width="8" height="8"><path d="M0 4h8M4 0v8" stroke="#666" stroke-width="2"/></svg></button><span class="ps-1">Vues 3D</span></div></li>
                <li><div class="trow"><button class="btn" aria-label="Réduire"><svg width="8" height="2"><path d="M0 1h8" stroke="#666" stroke-width="2"/></svg></button><span class="ps-1">Elévations</span></div>
                  <ul class="g2">
                    <li><div class="trow"><svg class="s16 me-1"><use href="#sheet"/></svg>Elévation Est</div></li>
                    <li><div class="trow"><svg class="s16 me-1"><use href="#sheet"/></svg>Elévation Nord</div></li>
                    <li><div class="trow"><svg class="s16 me-1"><use href="#sheet"/></svg>Elévation Ouest</div></li>
                    <li><div class="trow"><svg class="s16 me-1"><use href="#sheet"/></svg>Elévation Sud</div></li>
                  </ul></li>
                <li><div class="trow"><button class="btn" aria-label="Développer"><svg width="8" height="8"><path d="M0 4h8M4 0v8" stroke="#666" stroke-width="2"/></svg></button><span class="ps-1">Coupes (Coupe du bâtiment)</span></div></li>
                <li><div class="trow"><button class="btn" aria-label="Développer"><svg width="8" height="8"><path d="M0 4h8M4 0v8" stroke="#666" stroke-width="2"/></svg></button><span class="ps-1">Plans de surface (Louable)</span></div></li>
              </ul></li>
            <li><div class="trow ps-4"><svg class="s16 me-1" viewBox="0 0 16 16"><path d="M.5.500h15v15H.5z" fill="#fff" stroke="#555"/><path d="M0 0h16v3H0z" fill="#555"/><path d="M2.500 5.500h3v3h-3zM7 5.500h3m1 0h3M7 8.500h3m1 0h3M7 11.500h3m1 0h3M7 13.500h3m1 0h3" fill="none" stroke="#555"/><circle cx="4" cy="12" r="1.500" fill="none" stroke="#555"/></svg>Légendes</div></li>
            <li><div class="trow"><button class="btn" aria-label="Réduire"><svg width="8" height="2"><path d="M0 1h8" stroke="#666" stroke-width="2"/></svg></button><svg class="s16 ms-1 me-1" viewBox="0 0 16 16"><path d="M.5 2.500h15v11H.5zM.5 7h15M.5 10h15M5.500 4v9M10.500 4v9" fill="#fff" stroke="#555"/><path d="M0 2h16v2.500H0z" fill="#555"/></svg>Nomenclatures/Quantités (tout)</div>
              <ul class="g1"><li><div class="trow leaf"><svg class="s16 me-1"><use href="#sheet"/></svg>Nomenclature des fenêtres</div></li><li></li></ul></li>
          </ul>
        </div>
        <div class="vbar"><button class="btn" aria-label="Défiler vers le haut"><svg width="10" height="6"><use href="#up"/></svg></button><div class="thumb-v mb-auto mt-1" style="height:80px"></div><button class="btn" aria-label="Défiler vers le bas"><svg width="10" height="6"><use href="#down"/></svg></button></div>
      </div>
    </section>
  </aside>

  <section class="d-flex flex-column flex-grow-1" style="min-width:0;padding-left:1px">
    <div class="viewtabs d-flex align-items-center flex-shrink-0">
      <button class="btn vtab"><svg class="s16"><use href="#floorv"/></svg>Niveau 0</button>
      <button class="btn vtab"><svg class="s16"><use href="#floorv"/></svg>Niveau 1</button>
      <button class="btn vtab"><svg class="s16"><use href="#areav"/></svg>Niveau 1</button>
      <div class="vtab vtab-on"><svg class="s16"><use href="#area"/></svg><span class="flex-grow-1">Niveau 0</span><button class="btn" aria-label="Fermer la vue"><svg width="10" height="10"><use href="#close"/></svg></button></div>
      <button class="btn ms-auto me-1" aria-label="Liste des vues"><svg width="8" height="7" viewBox="0 0 8 7"><path d="M0 .5h8M0 3h8L4 7z" fill="#666" stroke="#666" stroke-width=".6"/></svg></button>
    </div>
    <div class="d-flex flex-grow-1" style="min-height:0">
      <div class="drawing flex-grow-1 position-relative overflow-hidden">
        <svg class="plan" viewBox="324 195 1579 802" preserveAspectRatio="xMinYMin slice" fill="none" stroke="#000" shape-rendering="crispEdges">
          <!-- terrace and outer outline -->
          <path d="M647.500 620.500H713M647.500 620V772.500H1092.500V564.500H939.500V549.500H863.500M1009.500 669.500H1092.500M1002.500 712v60"/>
          <path d="M652 622.500h60" stroke-width="4" stroke-dasharray="3 1 2 1 2 2"/><path d="M650 624v23" stroke-width="4" stroke-dasharray="3 1 2 1"/>
          <path d="M1009 565.500h83" stroke-width="3" stroke-dasharray="9 1 3 1 3 1"/><path d="M1091 567v22" stroke-width="3" stroke-dasharray="3 1"/>
          <circle cx="649" cy="709.500" r="1.500"/><circle cx="715" cy="709.500" r="1.500"/><circle cx="644.500" cy="621.500" r="1.500"/>
          <!-- garage -->
          <path d="M713 546h151" stroke-width="2"/><path d="M713.500 545v103.500h55v-4M780.500 633v15.500h4v64H858l15 17h48l13-17h68.500M863.500 545v36.500H889M914 581.500h95.500v88M784.500 642.500H834.500v4H788M847.500 630v16M847 642.500h12M847 646.500h17M863.500 585v17"/>
          <path d="M716.500 549.500h143v95h-143zM860 584.500h145.500v91h80v91h-76v-57h-77l-12 16h-46l-13.500-16H788.500v-64" stroke="#8c0048"/>
          <path d="M716.500 549.500h143v95h-143zM860 584.500h145.500v91h80v91h-76v-57" stroke-dasharray="5 14 3 9"/>
          <path d="M808 549h29M871 584h12M919 584h11M804 711.500h42M949 711.500h42M876 728h42M1026 767.500h42" stroke-width="2"/>
          <path d="M786.500 677.500v15M1006.500 605v11M1007.500 649v9" stroke-width="3"/>
          <path d="m858 712 15 17M862 711l13 16M921 728l12-15" stroke-width="2" stroke-dasharray="5 1"/>
          <!-- interior rooms -->
          <path d="M916.500 585v27" stroke-width="2"/><path d="M915 612h4M931 612h20" stroke-width="2"/><path d="M948.500 584v28M950.500 584v28M918.500 599v13M863.500 639.500h30v4h-30M915.500 627v16.500h29v-6h61M941.500 626.500v13h-26M941 626.500h14M941 634.500h64"/>
          <path d="M915 627.500h27" stroke-width="2"/><path d="M913.500 566v16M1005.500 675v17.500h16M1009.500 676v16M1005.500 709v-4h4v4M1026.500 669v5.500h10v-5.500M1092 689.500h-5.500v10h6M1092 715.500h-5.500v11h6"/>
          <!-- door swings -->
          <g stroke="#000088" stroke-dasharray="3 2"><path d="M768.500 644q1-11 12-12M834.500 646q0-14 13-16M898 582q1-13 15-17M919 599q11 1 12 13M940 613q14 4 14 13M1021.500 693q0 10-11 12"/></g>
          <!-- stairs -->
          <path d="M863 602.500h21.500v16.500h-4v23H864" stroke="#8c0048"/>
          <path d="M864.500 603v15.500h20M865 604l18 14M871 603l11 15M877 603l6 15M865 610l17 8M865 614h9"/>
          <path d="M863.500 619v39M880.500 619v39" stroke="#000088" stroke-width="2" stroke-dasharray="3 1"/>
          <path d="M866 623.500h13M866 627.500h13M866 631.500h13M866 636.500h13M866 645.500h13M866 649.500h13M866 653.500h13M866 657.500h13" stroke="#000088" stroke-dasharray="3 2"/>
          <path d="M890 582h8" stroke="#5a5ac8" stroke-width="2"/>
          <!-- section and elevation marks -->
          <path d="M618 619h4v16h-4z" fill="#000" stroke="none"/>
          <path d="M622 619.500h105" stroke="#1479e6" stroke-dasharray="5 4 1 4"/>
          <path d="m853 711 21 26" stroke="#1479e6" stroke-dasharray="4 3 1 3"/>
          <path d="m875 738 10-8 5 0-12 11z" fill="#000" stroke="none"/>
          <g stroke="#0a3cc0" shape-rendering="auto"><path d="M726 619.500h30l-15 14z" fill="#0a3cc0" stroke="none"/><circle cx="741.500" cy="619" r="10.500" fill="#cdcdcd"/><path d="M726 619.500h30M738 614.500h3M737 623.500h6"/>
          <path d="M832 687h22v7l-4 2zM848 709h4v-9z" fill="#0a3cc0"/><circle cx="842.500" cy="698" r="10.500" fill="#cdcdcd"/><path d="M832 698.500h21M840 693.500h4M839 703.500h6"/></g>
          <g shape-rendering="auto"><path d="M823 350h21l-10.500 13z" fill="#000" stroke="none"/><circle cx="833.500" cy="348.500" r="10" fill="#cdcdcd"/><path d="M833.500 364v4" stroke-opacity=".4"/>
          <path d="M358 686v22l13-11z" fill="#000" stroke="none"/><circle cx="356.500" cy="697" r="10" fill="#cdcdcd"/>
          <path d="M1310 686v22l-14-11z" fill="#000" stroke="none"/><circle cx="1311.500" cy="697" r="10" fill="#cdcdcd"/></g>
          <g stroke="none" font-size="6" text-anchor="middle"><text x="907" y="659" fill="#111">Surface</text><text x="907" y="665" fill="#000088">102.96 m²</text></g>
        </svg>
        <div class="navbox d-flex flex-column align-items-center justify-content-between py-1">
          <svg width="31" height="105" viewBox="0 0 31 105"><g fill="none" stroke="#8a8a8a"><circle cx="25.500" cy="3.500" r="3"/><path d="m24 2 3 3m0-3-3 3"/><circle cx="25.500" cy="101" r="3"/><path d="M24 101h3M3 53.500h26"/></g><path d="M14 18h8v9a9 9 0 1 1-8-9z" fill="#e6e6ea" stroke="#8c8c94" stroke-width="1.500"/><circle cx="13" cy="26" r="4.500" fill="#f6f6f6" stroke="#999"/><text x="15" y="39" font-size="8" font-weight="700" fill="#4f7fb3">2D</text><path d="M12 45h6l-3 3zM12 87h6l-3 3z" fill="#777"/><path d="M8 64h8" stroke="#888" stroke-width="2"/><circle cx="17" cy="71" r="3.500" fill="#e3ece9" stroke="#888"/><path d="m20 74 4 4" stroke="#888" stroke-width="2"/></svg>
        </div>
      </div>
      <div class="vbar" style="border-top:2px solid #fff"><button class="btn" aria-label="Défiler vers le haut"><svg width="10" height="6"><use href="#up"/></svg></button><div class="thumb-v" style="height:17px"></div><button class="btn" aria-label="Défiler vers le bas"><svg width="10" height="6"><use href="#down"/></svg></button></div>
    </div>
    <div class="viewctl d-flex align-items-center flex-shrink-0">
      <button class="btn scale-btn">1 : 100</button>
      <button class="btn vc" aria-label="Niveau de détail"><svg class="s16" viewBox="0 0 16 16"><path d="M.5 2.500h15v11H.5z" fill="#f5f5f5" stroke="#555"/><path d="M2 4h4v3H2zM10 4h4v3h-4zM6 7h4v3H6zM2 10h4v2H2zM10 10h4v2h-4z" fill="#777"/></svg></button>
      <button class="btn vc" aria-label="Style visuel"><svg class="s16" viewBox="0 0 16 16"><path d="m1.500 5 4-3.500h9v9l-4 4h-9zM1.500 5h9v9.500M10.500 5l4-3.500" fill="#fafafa" stroke="#555"/></svg></button>
      <button class="btn vc" aria-label="Soleil"><svg class="s16" viewBox="0 0 16 16"><path d="M6.500 0v13M0 6.500h13M2 2l9 9M11 2l-9 9" stroke="#f5a623"/><circle cx="6.500" cy="6.500" r="3.500" fill="#f59b00"/><use href="#bulb" x="6" y="5" width="11" height="11"/></svg></button>
      <button class="btn vc" aria-label="Ombres"><svg class="s16" viewBox="0 0 16 16"><ellipse cx="7" cy="13.500" rx="6" ry="1.500" fill="#999"/><circle cx="6.500" cy="6" r="5.500" fill="url(#gr)" stroke="#777"/><use href="#bulb" x="6" y="5" width="11" height="11"/></svg></button>
      <button class="btn vc" aria-label="Cadrer la vue"><svg class="s16" viewBox="0 0 16 16"><path d="M5 16V4h11" fill="none" stroke="#555" stroke-width="2"/><path d="M11 0v3M0 10.500h4" stroke="#1e88e5" stroke-width="2"/><path d="m9 9 6 6m0-6-6 6" stroke="#f22" stroke-width="2"/></svg></button>
      <button class="btn vc" aria-label="Zone cadrée"><svg class="s16" viewBox="0 0 16 16"><path d="M5 16V4h11" fill="none" stroke="#555" stroke-width="2"/><path d="M11 0v3M0 10.500h4" stroke="#1e88e5" stroke-width="2"/><use href="#bulb" x="6" y="5" width="11" height="11"/></svg></button>
      <button class="btn vc" aria-label="Masquer temporairement"><svg class="s16" viewBox="0 0 16 16" fill="none" stroke="#555"><circle cx="4" cy="10" r="2.500"/><circle cx="10.500" cy="10" r="2.500"/><path d="M2 8 6 4M9 8l4-4 1 1"/></svg></button>
      <button class="btn vc" aria-label="Eléments cachés"><svg class="s16"><use href="#bulb"/></svg></button>
      <button class="btn vc" aria-label="Propriétés temporaires"><svg class="s16" viewBox="0 0 16 16" fill="none" stroke="#666"><path d="M7 11.500H2.500v-9h9V7M5 9V5h4v2"/><path d="M7.500 7.500h7v7h-7z" stroke-dasharray="2 1"/></svg></button>
      <button class="btn vc" aria-label="Modèle analytique"><svg class="s16" viewBox="0 0 16 16"><path d="m2 5 4-4h9v6M2 5h9M5 1v4M9 1v4M13 1v6" fill="none" stroke="#555"/><path d="M2 8h8M2 12h6M3.500 6v9M7 6v9" stroke="#c33"/><use href="#bulb" x="6" y="5" width="11" height="11"/></svg></button>
      <button class="btn vc" aria-label="Contraintes visibles"><svg class="s16" viewBox="0 0 16 16"><path d="M1.500 1v13M14.500 1v5M2 3.500h12" fill="none" stroke="#555"/><path d="M2 13.500h6" stroke="#555" stroke-dasharray="2 1"/><use href="#bulb" x="6" y="5" width="11" height="11"/></svg></button>
      <div class="hbar d-flex align-items-center justify-content-between flex-grow-1">
        <button class="btn" aria-label="Défiler à gauche"><svg width="6" height="10" viewBox="0 0 6 10"><path d="M5 1 1.500 5 5 9" fill="none" stroke="#888" stroke-width="1.800"/></svg></button>
        <div class="thumb-h"></div>
        <button class="btn" aria-label="Défiler à droite"><svg width="6" height="10" viewBox="0 0 6 10"><path d="M1 1 4.500 5 1 9" fill="none" stroke="#888" stroke-width="1.800"/></svg></button>
      </div>
      <svg width="17" height="17" viewBox="0 0 17 17" fill="#999"><path d="M12 6h2v2h-2zM12 11h2v2h-2zM8 11h2v2H8z"/></svg>
    </div>
  </section>
</main>

<footer class="status d-flex align-items-center flex-shrink-0">
  <div class="text-nowrap flex-shrink-0" style="width:43%;padding-left:1px">Cliquez pour sélectionner. Appuyez sur TAB pour afficher d'autres options, sur CTRL pour ajouter et sur MAJ pour désactiver.</div>
  <button class="btn" aria-label="Sous-projets"><svg class="s16" viewBox="0 0 16 16"><path d="m1 3 5-2 2 2v9l-4 2-3-3z" fill="#4d9bd5"/><path d="m8 2 4-1 3 2v6l-5 1z" fill="#d9733a"/><path d="m6 7 4-1 3 2v6l-4 2-3-2z" fill="#47b86b" stroke="#2e7d4a" stroke-width=".6"/></svg></button>
  <select class="flat-select flex-grow-1" style="max-width:201px" aria-label="Sous-projet actif"><option></option></select>
  <svg width="8" height="6" opacity=".5"><use href="#down"/></svg>
  <button class="btn d-flex align-items-center ms-2 pe-1" style="color:#8aa4c0"><svg class="s16" viewBox="0 0 16 16" fill="none" stroke="#777"><path d="M8.500 1.500h5v4h-5zM11 6v2H5v2M2.500 10.500h6v2h-6zM1.500 14.500h8"/></svg>:0</button>
  <button class="btn ms-4" aria-label="Variantes"><svg class="s16 me-1" style="margin-left:3px" viewBox="0 0 16 16"><path d="M1.500.500h13v15h-13z" fill="#fff" stroke="#444"/><path d="M1 0h14v3H1z" fill="#444"/><path d="M3 6h2m1 0h7M3 9h2m1 0h7M3 12h2m1 0h7" stroke="#444"/></svg></button>
  <button class="btn ms-1" aria-label="Ajouter à la variante"><svg class="s16 ms-1" viewBox="0 0 16 16"><path d="M2.500.500h12v11h-12z" fill="#eee" stroke="#888"/><path d="M2 0h13v3H2z" fill="#888"/><path d="M7 5h6M7 8h6M1 13h7M5 10l3 3-3 3" stroke="#888" fill="none"/></svg></button>
  <select class="flat-select ms-1 ps-1" style="width:195px;color:#aaa" aria-label="Variante"><option>Modèle de base</option></select>
  <svg width="8" height="6" opacity=".5"><use href="#down"/></svg>
  <div class="st-end d-flex ms-auto align-items-center">
    <button class="btn st" aria-label="Sélectionner les liens"><svg class="s16" viewBox="0 0 16 16"><path d="M0 5a2.500 2.500 0 0 1 5-1h3" fill="none" stroke="#e8833a" stroke-width="1.500"/><use href="#ptr"/><use href="#redx"/></svg></button>
    <button class="btn st" aria-label="Sélectionner le fond de plan"><svg class="s16" viewBox="0 0 16 16"><path d="M0 9 7 1l3 2-4 6zM0 13l2-3h5v3z" fill="#4d9bd5"/><use href="#ptr"/><use href="#redx"/></svg></button>
    <button class="btn st" aria-label="Sélectionner les éléments verrouillés"><svg class="s16" viewBox="0 0 16 16"><path d="M3 1h6M4 1v5L1 9h9L8 6V1M6 9v4" fill="none" stroke="#444"/><use href="#ptr"/></svg></button>
    <button class="btn st" aria-label="Sélectionner par face"><svg class="s16" viewBox="0 0 16 16"><path d="m1 4 4-3h4v3L5 8v7H1z" fill="#4d9bd5"/><use href="#ptr"/><use href="#redx"/></svg></button>
    <button class="btn st" aria-label="Faire glisser"><svg class="s16" viewBox="0 0 16 16"><path d="M6 0v12M0 6h11" stroke="#222" stroke-width="1.500"/><path d="m6 0 2 3H4zM0 6l3-2v4z"/><use href="#ptr"/><use href="#redx"/></svg></button>
    <button class="btn st" aria-label="Processus"><svg class="s16" viewBox="0 0 16 16"><circle cx="8" cy="8" r="6" fill="none" stroke="#bbb" stroke-width="2.500" stroke-dasharray="2.700 2"/></svg></button>
    <button class="btn d-flex align-items-center ps-1"><svg class="s16" viewBox="0 0 16 16"><path d="M.5 1.500h15L10 8v7l-4-2V8z" fill="url(#ghor)" stroke="#333"/></svg>:0</button>
  </div>
</footer>

<svg class="callout" viewBox="0 0 1320 340" aria-hidden="true"><path d="m1206 45 20 22-7-1 66 231-77-228-5 3z" fill="#000" opacity=".3" transform="translate(3 3)" style="filter:blur(2px)"/><path d="m1206 45 20 22-7-1.500L1285.500 297 1207 70l-4 1.500z" fill="#f00" stroke="#f00"/></svg>
<div class="step">1</div>
<script src="https://cdn.jsdelivr.net/npm/bootstrap@5.3.0/dist/js/bootstrap.bundle.min.js"></script>
</body>
</html>
